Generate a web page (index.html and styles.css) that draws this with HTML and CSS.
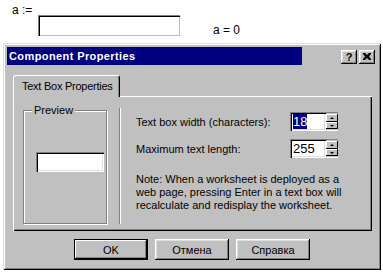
FILE: index.html
```html
<!DOCTYPE html>
<html lang="en">
<head>
    <meta charset="UTF-8">
    <title>Component Properties</title>
    <link rel="stylesheet" href="styles.css">
</head>
<body>
    <div class="sheet">
        <div class="def">a :=</div>
        <div class="def-row">
            <div class="sheet-box"></div>
            <div class="result">a = 0</div>
        </div>
    </div>

    <div class="dialog">
        <div class="titlebar">
            <div class="caption">Component Properties</div>
            <div class="title-btns">
                <span class="tbtn help">?</span>
                <span class="tbtn">
                    <svg width="8" height="7" viewBox="0 0 8 7">
                        <path d="M0 0h2l2 2 2-2h2v1l-2 2.5 2 2.5v1h-2l-2-2-2 2h-2v-1l2-2.5-2-2.5z" fill="#000"/>
                    </svg>
                </span>
            </div>
        </div>

        <div class="dlg-body">
            <div class="tab">Text Box Properties</div>
            <div class="panel">
                <div class="group">
                    <span class="legend">Preview</span>
                    <div class="preview-box"></div>
                </div>
                <div class="sep"></div>
                <div class="props">
                    <div class="prop">
                        <span class="label">Text box width (characters):</span>
                        <div class="spin">
                            <div class="spin-edit"><span class="sel">18</span></div>
                            <div class="spin-btns"><span class="up"></span><span class="down"></span></div>
                        </div>
                    </div>
                    <div class="prop">
                        <span class="label">Maximum text length:</span>
                        <div class="spin">
                            <div class="spin-edit"><span>255</span></div>
                            <div class="spin-btns"><span class="up"></span><span class="down"></span></div>
                        </div>
                    </div>
                    <p class="note">Note: When a worksheet is deployed as a<br>web page, pressing Enter in a text box will<br>recalculate and redisplay the worksheet.</p>
                </div>
            </div>

            <div class="buttons">
                <button class="btn default">OK</button>
                <button class="btn">Отмена</button>
                <button class="btn">Справка</button>
            </div>
        </div>
    </div>
</body>
</html>
```

FILE: styles.css
```css
body {
    margin: 0;
    background: #fff;
    font-family: "Liberation Sans", Arial, sans-serif;
    font-size: 11px;
    color: #000;
}

/* worksheet above the dialog */
.sheet {
    height: 43px;
}

.def {
    padding: 5px 0 0 12px;
    line-height: 10px;
    font-size: 12px;
}

.def-row {
    display: flex;
}

.sheet-box {
    margin-left: 38px;
    width: 142px;
    height: 21px;
    background: #fff;
    box-shadow: inset 1px 1px #808080, inset 2px 2px #000, inset -1px -1px #c0c0c0;
}

.result {
    align-self: flex-end;
    margin-left: 33px;
    line-height: 12px;
    font-size: 12px;
}

/* dialog window */
.dialog {
    margin-left: 3px;
    width: 378px;
    height: 227px;
    box-sizing: border-box;
    padding: 4px;
    background: #c0c0c0;
    box-shadow: inset 1px 1px #dfdfdf, inset -1px -1px #000, inset 2px 2px #fff, inset -2px -2px #808080;
}

.titlebar {
    display: flex;
    align-items: center;
    height: 18px;
}

.caption {
    width: 293px;
    height: 18px;
    padding-left: 2px;
    line-height: 18px;
    background: #000080;
    color: #fff;
    font-weight: bold;
    letter-spacing: 0.4px;
}

.title-btns {
    display: flex;
    gap: 2px;
    margin: 1px 2px 0 auto;
}

.tbtn {
    width: 16px;
    height: 14px;
    display: flex;
    align-items: center;
    justify-content: center;
    background: #c0c0c0;
    font-weight: bold;
    font-size: 11px;
    box-shadow: inset -1px -1px #000, inset 1px 1px #fff, inset -2px -2px #808080, inset 2px 2px #dfdfdf;
}

.dlg-body {
    padding: 10px 5px 0 6px;
}

.tab {
    position: relative;
    z-index: 1;
    width: 107px;
    height: 22px;
    margin-bottom: -1px;
    box-sizing: border-box;
    padding: 3px 0 0 8px;
    line-height: 14px;
    letter-spacing: -0.25px;
    background: #c0c0c0;
    border-radius: 3px 3px 0 0;
    border-top: 1px solid #fff;
    border-left: 1px solid #fff;
    border-right: 1px solid #000;
    box-shadow: inset -1px 0 #808080;
}

.panel {
    display: flex;
    width: 359px;
    height: 135px;
    box-sizing: border-box;
    padding: 8px 0 0 10px;
    box-shadow: inset 1px 1px #fff, inset -1px -1px #000, inset -2px -2px #808080;
}

.group {
    position: relative;
    margin-top: 6px;
    width: 84px;
    height: 114px;
    box-sizing: border-box;
    border: 1px solid #808080;
    box-shadow: inset 1px 1px #fff, 1px 1px #fff;
}

.legend {
    position: absolute;
    top: -7px;
    left: 8px;
    padding: 0 2px;
    line-height: 12px;
    background: #c0c0c0;
}

.preview-box {
    margin: 41px 0 0 12px;
    width: 68px;
    height: 20px;
    background: #fff;
    box-shadow: inset 1px 1px #808080, inset 2px 2px #000, inset -1px -1px #fff, inset -2px -2px #dfdfdf;
}

.sep {
    margin: 4px 0 0 12px;
    width: 1px;
    height: 116px;
    background: #808080;
    border-right: 1px solid #fff;
}

.props {
    padding: 8px 0 0 15px;
}

.prop {
    display: flex;
    align-items: center;
    margin-bottom: 8px;
}

.label {
    width: 154px;
}

.spin {
    display: flex;
    height: 19px;
}

.spin-edit {
    width: 36px;
    box-sizing: border-box;
    padding: 3px 0 0 3px;
    background: #fff;
    font-size: 13px;
    line-height: 14px;
    box-shadow: inset 1px 1px #808080, inset 2px 2px #000, inset -1px -1px #fff, inset -2px -2px #dfdfdf;
}

.sel {
    background: #000080;
    color: #fff;
}

.spin-btns {
    display: flex;
    flex-direction: column;
    width: 12px;
    padding: 2px 0;
    box-sizing: border-box;
    box-shadow: inset 0 1px #808080, inset 0 -1px #fff;
}

.spin-btns span {
    flex: 1;
    position: relative;
    background: #c0c0c0;
    box-shadow: inset -1px -1px #000, inset 1px 1px #fff;
}

.spin-btns span::after {
    content: "";
    position: absolute;
    left: 4px;
    top: 3px;
    border-left: 2px solid transparent;
    border-right: 2px solid transparent;
}

.spin-btns .up::after {
    border-bottom: 2px solid #000;
}

.spin-btns .down::after {
    border-top: 2px solid #000;
}

.note {
    margin: 15px 0 0;
    line-height: 13px;
    white-space: nowrap;
}

.buttons {
    display: flex;
    gap: 7px;
    margin: 8px 0 0 61px;
}

.btn {
    width: 74px;
    height: 21px;
    padding: 0;
    border: none;
    background: #c0c0c0;
    font-family: "Liberation Sans", Arial, sans-serif;
    font-size: 11px;
    color: #000;
    box-shadow: inset -1px -1px #000, inset 1px 1px #fff, inset -2px -2px #808080, inset 2px 2px #dfdfdf;
}

.btn.default {
    box-shadow: inset 0 0 0 1px #000, inset -2px -2px #000, inset 2px 2px #fff, inset -3px -3px #808080;
}
```
